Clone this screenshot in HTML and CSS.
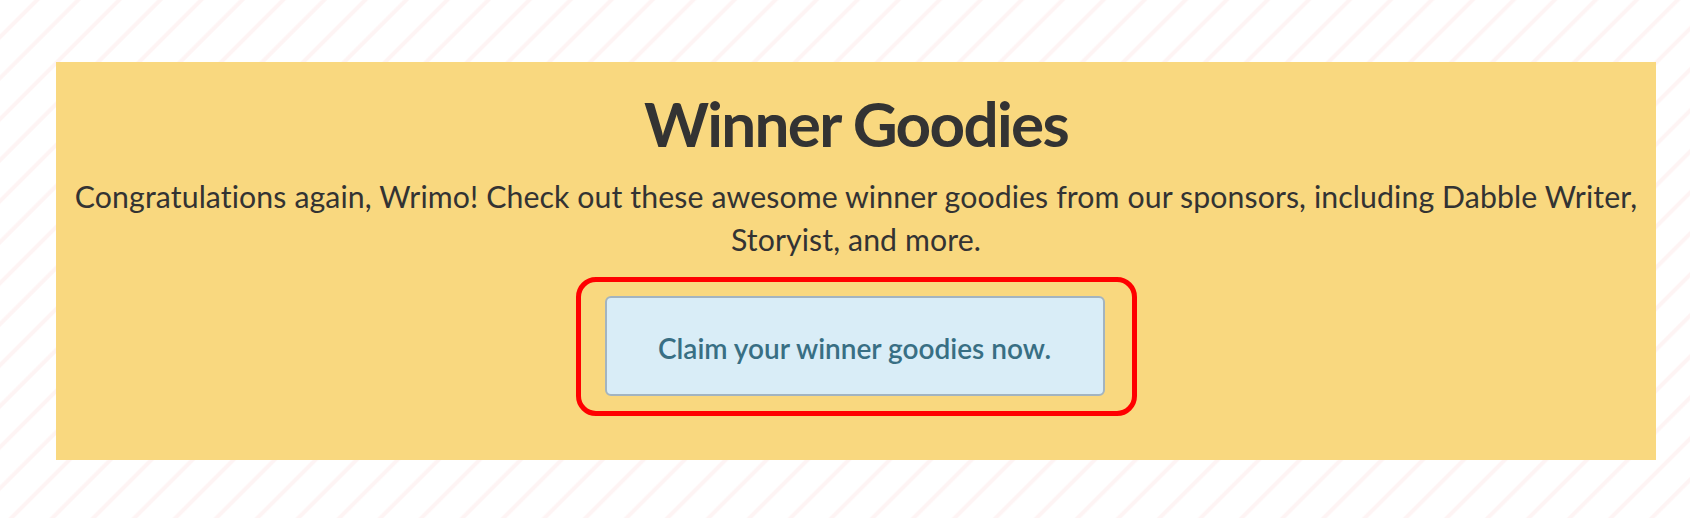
FILE: index.html
```html
<!DOCTYPE html>
<html lang="en">
<head>
<meta charset="utf-8">
<title>Winner Goodies</title>
<link rel="stylesheet" href="styles.css">
</head>
<body>
<div class="page">
  <section class="goodies">
    <h1 class="goodies-title">Winner Goodies</h1>
    <p class="goodies-text">Congratulations again, Wrimo! Check out these awesome winner goodies from our sponsors, including Dabble Writer, Storyist, and more.</p>
    <div class="highlight">
      <a class="claim-button" href="#">Claim your winner goodies now.</a>
    </div>
  </section>
</div>
</body>
</html>
```
FILE: styles.css
```css
html, body {
  margin: 0;
  padding: 0;
}

body {
  font-family: "Lato", "Open Sans", sans-serif;
  color: #333333;
  background-color: #ffffff;
  background-image: repeating-linear-gradient(
    135deg,
    rgba(255, 255, 255, 0) 0px,
    rgba(255, 255, 255, 0) 23.5px,
    #fef4f4 25px,
    #fef4f4 27.5px,
    rgba(255, 255, 255, 0) 29px
  );
  min-height: 518px;
}

.page {
  padding: 62px 34px 58px 56px;
}

.goodies {
  background: #f9d87f;
  padding: 27px 15px 44px;
  display: flex;
  flex-direction: column;
  align-items: center;
  text-align: center;
}

.goodies-title {
  margin: 0;
  font-size: 62px;
  line-height: 68px;
  font-weight: 700;
  letter-spacing: -1.7px;
  color: #333333;
}

.goodies-text {
  margin: 18px 0 0;
  font-size: 30.25px;
  line-height: 43px;
  font-weight: 400;
  letter-spacing: 0.1px;
}

.highlight {
  margin-top: 16px;
  border: 5px solid #ff0000;
  border-radius: 20px;
  padding: 14px 27px 15px 24px;
}

.claim-button {
  box-sizing: border-box;
  display: flex;
  align-items: center;
  justify-content: center;
  width: 500px;
  height: 100px;
  padding-top: 3px;
  background: #d9edf7;
  border: 2px solid #a3b4c0;
  border-radius: 6px;
  color: #386f84;
  font-size: 28px;
  font-weight: 600;
  text-decoration: none;
}
```
